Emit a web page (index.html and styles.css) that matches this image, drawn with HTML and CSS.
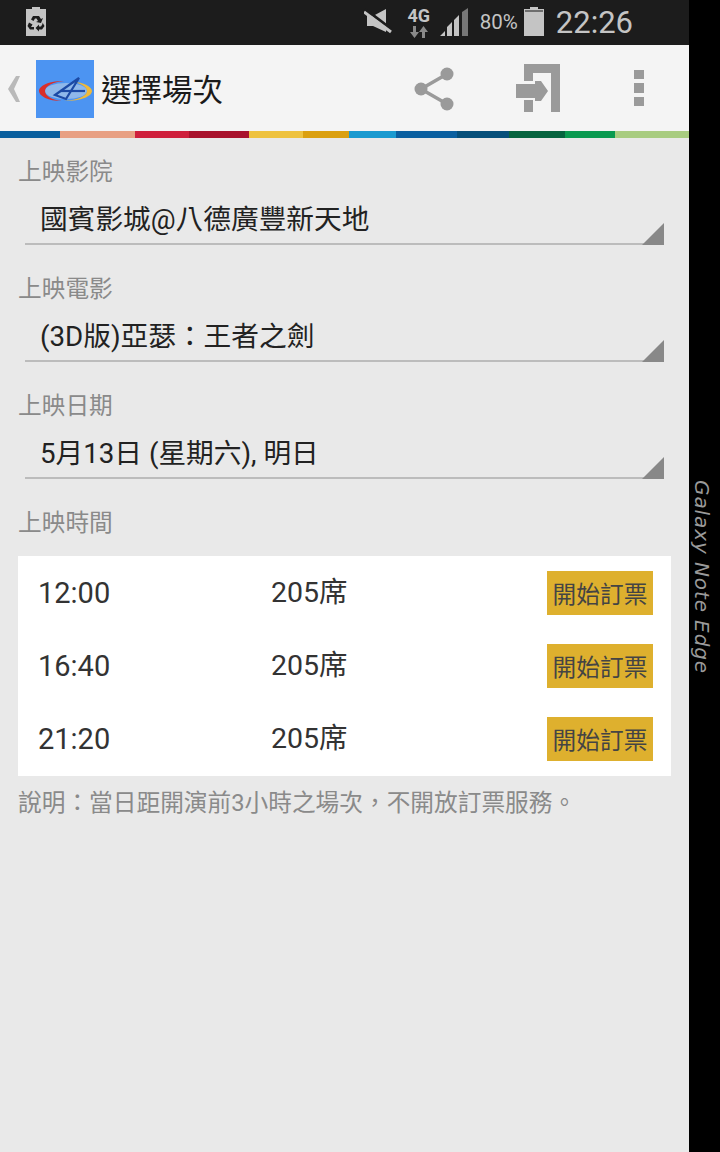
FILE: index.html
```html
<!DOCTYPE html>
<html lang="zh-Hant">
<head>
<meta charset="UTF-8">
<meta name="viewport" content="width=device-width, initial-scale=1">
<title>選擇場次</title>
<link rel="stylesheet" href="styles.css">
</head>
<body>
<div class="phone">
  <div class="screen">
    <div class="status-bar">
      <svg class="ic-recycle" width="20" height="29" viewBox="0 0 20 29">
        <path fill="#c4c4c4" d="M6 0h8v2h6v27H0V2h6z"/>
        <g fill="#1c1c1c">
          <path d="M7 9h6l2 3 2-1-2 5-5-1 2-1-1.500-2.500H9L7.500 14 5 12.500z"/>
          <path d="M16.500 15.500l2 3.500-2.500 3.500h-3v2l-3.500-3.500 3.500-3.500v2h2l1.500-2.500z"/>
          <path d="M3 15.500l3.500 2 -1.500 2.500h3v2.500H4L1.500 19z"/>
        </g>
      </svg>
      <div class="status-right">
        <svg class="ic-mute" width="28" height="28" viewBox="0 0 28 28">
          <path fill="#c4c4c4" d="M3 8h6L22 1v23L9 18H3z"/>
          <path stroke="#1c1c1c" stroke-width="3" d="M1 1l26 20"/>
          <path stroke="#c4c4c4" stroke-width="3" d="M0 4l27 20"/>
        </svg>
        <div class="net">
          <span class="net-label">4G</span>
          <svg width="18" height="12" viewBox="0 0 18 12">
            <path fill="#8a8a8a" d="M3 0h3v6h3l-4.500 6L0 6h3zM12 12h3V6h3l-4.500-6L9 6h3z"/>
          </svg>
        </div>
        <svg class="ic-signal" width="29" height="28" viewBox="0 0 29 28">
          <path fill="#c4c4c4" d="M0 28l5-5v5zM7 28v-9l5-5v14zM14 28V12l5-5v21z"/>
          <path fill="#777" d="M22 28V4l6-4v28z"/>
        </svg>
        <span class="percent">80%</span>
        <svg class="ic-battery" width="20" height="29" viewBox="0 0 20 29">
          <path fill="#c4c4c4" d="M6 0h8v2h6v27H0V2h6z"/>
          <path fill="#6e6e6e" d="M1 3h18v2H1z"/>
        </svg>
        <span class="clock">22:26</span>
      </div>
    </div>

    <header class="app-bar">
      <svg class="ic-back" width="14" height="26" viewBox="0 0 14 26">
        <path fill="#b9b9b9" d="M9 0h4L7 13l6 13H9L1 13z"/>
      </svg>
      <svg class="logo" width="58" height="58" viewBox="0 0 58 58">
        <rect width="58" height="58" fill="#4c94f2"/>
        <ellipse cx="30" cy="31" rx="21" ry="8" fill="#8fb8ea"/>
        <path fill="#d92f2a" d="M28 21C10 21 3 27 3 31c0 5 9 10 23 10-10-1-17-5-17-10 0-5 8-9 19-10z"/>
        <path fill="#eeb93a" d="M36 22c12 0 20 5 20 9 0 5-10 10-28 10 14-1 23-5 23-10 0-4-6-8-15-9z"/>
        <g fill="none" stroke="#1c4aa5" stroke-width="2.200">
          <path d="M43 18L19 35l11 4z"/>
          <path d="M24 31h25"/>
        </g>
      </svg>
      <h1 class="title">選擇場次</h1>
      <div class="actions">
        <svg class="ic-share" width="42" height="44" viewBox="0 0 42 44">
          <path fill="none" stroke="#9a9a9a" stroke-width="3.500" d="M34 7L8 22l26 15"/>
          <circle cx="34" cy="7" r="6.500" fill="#9a9a9a"/>
          <circle cx="8" cy="22" r="6.500" fill="#9a9a9a"/>
          <circle cx="34" cy="37" r="6.500" fill="#9a9a9a"/>
        </svg>
        <svg class="ic-enter" width="45" height="48" viewBox="0 0 45 48">
          <path fill="#9a9a9a" d="M8 0h36v48h-9V9H17v8H8zM8 36h9v12H8z"/>
          <path fill="#9a9a9a" d="M0 20h19v-3h6l7 10-7 10h-6v-3H0z"/>
        </svg>
        <svg class="ic-more" width="10" height="36" viewBox="0 0 10 36">
          <path fill="#9a9a9a" d="M0 0h10v9H0zM0 13h10v10H0zM0 27h10v9H0z"/>
        </svg>
      </div>
    </header>

    <div class="stripe">
      <i class="seg s1"></i><i class="seg s2"></i><i class="seg s3"></i><i class="seg s4"></i>
      <i class="seg s5"></i><i class="seg s6"></i><i class="seg s7"></i><i class="seg s8"></i>
      <i class="seg s9"></i><i class="seg s10"></i><i class="seg s11"></i><i class="seg s12"></i>
    </div>

    <main class="content">
      <section class="group">
        <div class="label">上映影院</div>
        <div class="select">國賓影城@八德廣豐新天地</div>
      </section>
      <section class="group">
        <div class="label">上映電影</div>
        <div class="select">(3D版)亞瑟&#xFF1A;王者之劍</div>
      </section>
      <section class="group">
        <div class="label">上映日期</div>
        <div class="select">5月13日 (星期六), 明日</div>
      </section>
      <section class="group-last">
        <div class="label">上映時間</div>
      </section>

      <div class="times">
        <div class="row">
          <span class="time">12:00</span>
          <span class="seats">205席</span>
          <button class="book">開始訂票</button>
        </div>
        <div class="row">
          <span class="time">16:40</span>
          <span class="seats">205席</span>
          <button class="book">開始訂票</button>
        </div>
        <div class="row">
          <span class="time">21:20</span>
          <span class="seats">205席</span>
          <button class="book">開始訂票</button>
        </div>
      </div>
      <p class="note">說明&#xFF1A;當日距開演前3小時之場次&#xFF0C;不開放訂票服務。</p>
    </main>
  </div>
  <div class="edge"><span class="edge-text">Galaxy Note Edge</span></div>
</div>
</body>
</html>
```

FILE: styles.css
```css
* { box-sizing: border-box; }
html, body { margin: 0; height: 100%; background: #000; overflow: hidden; }
body { font-family: Roboto, "Noto Sans CJK TC", sans-serif; }
.phone { display: flex; width: 720px; height: 1152px; }
.screen { width: 689px; display: flex; flex-direction: column; background: #e9e9e9; }
.edge { width: 31px; background: #000; padding: 480px 0 0 1px; }
.edge-text { display: block; writing-mode: vertical-rl; font-family: "DejaVu Sans", sans-serif; font-style: italic; font-size: 20px; line-height: 24px; letter-spacing: 0.9px; color: #9a9a9a; }

.status-bar { height: 45px; background: #1c1c1c; display: flex; align-items: flex-start; justify-content: space-between; padding: 7px 56px 0 26px; color: #c4c4c4; }
.status-right { display: flex; align-items: flex-start; }
.ic-mute { margin-top: 1px; }
.net { width: 24px; margin-left: 15px; display: flex; flex-direction: column; align-items: center; }
.net-label { font-size: 18px; line-height: 17px; font-weight: 700; }
.net svg { display: block; margin-top: 2px; }
.ic-signal { margin-left: 9px; margin-top: 1px; }
.percent { margin-left: 11px; font-size: 20.500px; line-height: 30px; }
.ic-battery { margin-left: 6px; }
.clock { margin-left: 12px; font-size: 31px; line-height: 31px; }

.app-bar { height: 86px; background: #f4f4f4; display: flex; align-items: center; padding-left: 7px; }
.ic-back { margin-top: 1px; }
.logo { margin-left: 15px; margin-top: 2px; }
.title { margin: 0 0 0 7px; font-size: 30.500px; font-weight: 400; color: #1a1a1a; }
.actions { margin-left: auto; display: flex; align-items: center; padding-right: 45px; }
.ic-share { margin-right: 61px; margin-top: 2px; }
.ic-enter { margin-right: 73px; }

.stripe { height: 7px; display: flex; }
.seg { display: block; height: 100%; }
.s1 { width: 60px; background: #0a5f9e; }
.s2 { width: 75px; background: #e8a083; }
.s3 { width: 54px; background: #cf1f3c; }
.s4 { width: 60px; background: #a8122c; }
.s5 { width: 54px; background: #eec23f; }
.s6 { width: 46px; background: #dba010; }
.s7 { width: 47px; background: #1a9ad0; }
.s8 { width: 61px; background: #0a5fa0; }
.s9 { width: 52px; background: #064f7a; }
.s10 { width: 56px; background: #06643f; }
.s11 { width: 50px; background: #0a9a50; }
.s12 { flex: 1; background: #a8cc80; }

.content { padding: 0 18px; }
.group { height: 117px; padding-top: 18px; }
.group-last { padding-top: 18px; }
.label { height: 32px; line-height: 32px; font-size: 23.700px; color: #8a8a8a; }
.select { position: relative; height: 57px; margin-left: 7px; width: 639px; padding: 3px 0 0 15px; border-bottom: 2px solid #bcbcbc; display: flex; align-items: center; font-size: 27.700px; color: #222; }
.select::after { content: ""; position: absolute; right: 0; bottom: -2px; border-style: solid; border-width: 0 0 22px 22px; border-color: transparent transparent #888 transparent; }

.times { margin-top: 17px; width: 653px; height: 220px; background: #fff; display: flex; flex-direction: column; padding: 0 18px 0 20px; }
.row { height: 73.300px; display: flex; align-items: center; }
.time { width: 233px; font-size: 29px; line-height: 30px; color: #333; }
.seats { font-size: 28.500px; line-height: 30px; color: #333; }
.book { margin-left: auto; width: 106px; height: 44px; border: none; padding: 0; background: #deb02e; font-family: inherit; font-size: 23.700px; color: #444; }

.note { margin: 11px 0 0; line-height: 32px; font-size: 23.700px; color: #8a8a8a; }
```
